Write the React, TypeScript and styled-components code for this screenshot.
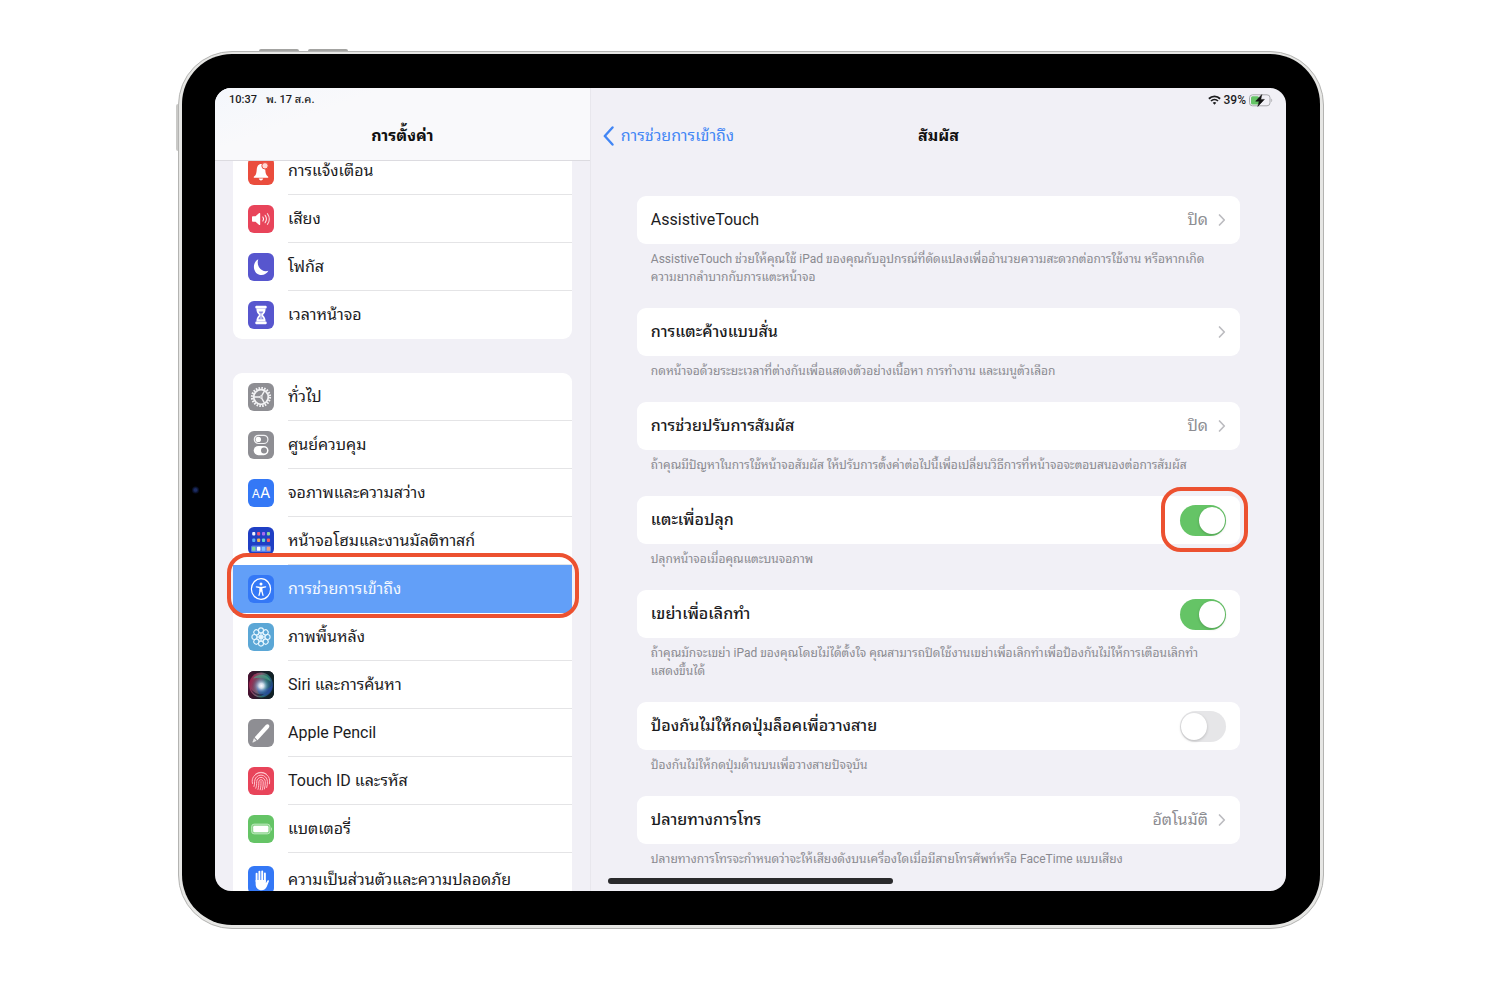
import React, { useState } from "react";
import styled, { createGlobalStyle, css } from "styled-components";

const RING = "#ec5130";

const GlobalStyle = createGlobalStyle`
  *, *::before, *::after { box-sizing: border-box; }
  body {
    margin: 0;
    background: #fff;
    color: #1c1c1e;
    font-family: Roboto, "Noto Sans Thai Looped", Loma, Waree, "Noto Sans", "Liberation Sans", sans-serif;
    -webkit-font-smoothing: antialiased;
  }
  button { font: inherit; color: inherit; background: none; border: 0; padding: 0; cursor: pointer; }
  h1, h2, p { margin: 0; }
`;

const ring = css`
  content: "";
  position: absolute;
  border: 4px solid ${RING};
  border-radius: 20px;
  pointer-events: none;
`;

const Stage = styled.div`
  height: 100vh;
  min-height: 640px;
  display: flex;
  padding: 51px 176px 71px 178px;
`;

const Device = styled.div`
  position: relative;
  flex: 1;
  min-width: 0;
  display: flex;
  padding: 2px 3px 3px;
  border: 1px solid #b4b4b2;
  border-radius: 54px;
  background: #e6e6e4;
`;

const SideKey = styled.span<{ $edge: "top" | "left"; $at: number; $length: number }>`
  position: absolute;
  background: #a3a3a1;
  ${(p) =>
    p.$edge === "top"
      ? css`top: -3px; left: ${p.$at}px; width: ${p.$length}px; height: 2px; border-radius: 2px 2px 0 0;`
      : css`left: -3px; top: ${p.$at}px; height: ${p.$length}px; width: 2px; border-radius: 2px 0 0 2px; background: #c9c9c7;`}
`;

const Camera = styled.span`
  position: absolute;
  left: 13px;
  top: 50%;
  transform: translateY(-50%);
  width: 7px;
  height: 7px;
  border-radius: 50%;
  background: radial-gradient(#1c2c63 0 25%, #080e24 60%);
`;

const Bezel = styled.div`
  flex: 1;
  min-width: 0;
  display: flex;
  padding: 34px 34px 34px 33px;
  border-radius: 50px;
  background: #000;
`;

const Screen = styled.div`
  flex: 1;
  min-width: 0;
  display: grid;
  grid-template-columns: 35% minmax(0, 1fr);
  border-radius: 16px;
  overflow: hidden;
  background: #f1f0f6;
`;

const Sidebar = styled.aside`
  min-width: 0;
  min-height: 0;
  display: flex;
  flex-direction: column;
  overflow: hidden;
`;

const SidebarHeader = styled.header`
  position: relative;
  z-index: 2;
  flex: none;
  height: 73px;
  display: flex;
  flex-direction: column;
  border-bottom: 1px solid #dcdbe0;
  background: linear-gradient(160deg, #f4f7fc, #f9f9fb 30%, #f9f9fb);
`;

const StatusLine = styled.div<{ $end?: boolean }>`
  height: 24px;
  display: flex;
  align-items: center;
  justify-content: ${(p) => (p.$end ? "flex-end" : "flex-start")};
  gap: ${(p) => (p.$end ? 3 : 9)}px;
  padding: 0 ${(p) => (p.$end ? 13 : 14)}px;
  font-size: ${(p) => (p.$end ? 12 : 11)}px;
  line-height: 16px;
  font-weight: 500;
`;

const BarTitle = styled.h1`
  font-size: 16px;
  line-height: 24px;
  font-weight: 700;
  text-align: center;
  color: #111;
`;

const SidebarTitleRow = styled.div`
  height: 48px;
  display: grid;
  place-items: center;
`;

const MenuList = styled.nav`
  flex: 1;
  min-height: 0;
  display: flex;
  flex-direction: column;
  gap: 34px;
  margin-top: -14px;
  padding: 0 18px;
`;

const MenuGroup = styled.div`
  flex: none;
  border-radius: 9px;
  background: #fff;
`;

const MenuText = styled.span`
  flex: 1;
  align-self: stretch;
  display: flex;
  align-items: center;
  border-bottom: 1px solid #e4e4e6;
  white-space: nowrap;
`;

const MenuLink = styled.a<{ $selected?: boolean; $tall?: boolean }>`
  position: relative;
  display: flex;
  align-items: center;
  gap: 14px;
  height: ${(p) => (p.$tall ? 54 : 48)}px;
  padding-left: 15px;
  font-size: 16px;
  line-height: 24px;
  text-decoration: none;
  color: #1c1c1e;

  &:last-child ${MenuText} { border-bottom-color: transparent; }

  ${(p) =>
    p.$selected &&
    css`
      z-index: 1;
      background: #629ff8;
      color: #f3f8ff;
      ${MenuText} { border-bottom-color: transparent; }
      &::after { ${ring} inset: -12px -7px -5px -6px; }
    `}
`;

const Tile = styled.span<{ $bg: string }>`
  flex: none;
  width: 26px;
  height: 28px;
  display: flex;
  align-items: center;
  justify-content: center;
  border-radius: 6px;
  overflow: hidden;
  background: ${(p) => p.$bg};
  color: #fff;
  svg { display: block; width: 26px; height: 28px; }
`;

const LetterPair = styled.span`
  display: flex;
  align-items: baseline;
  font-family: Inter, sans-serif;
  font-size: 15px;
  line-height: 18px;
  small { font-size: 12px; }
`;

const Detail = styled.main`
  position: relative;
  min-width: 0;
  min-height: 0;
  display: flex;
  flex-direction: column;
  overflow: hidden;
  border-left: 1px solid #e8e7ed;
`;

const DetailBar = styled.header`
  height: 48px;
  flex: none;
  display: grid;
  grid-template-columns: 1fr auto 1fr;
  align-items: center;
  padding: 0 12px;
`;

const BackButton = styled.button`
  && { color: #4286f5; }
  display: flex;
  align-items: center;
  gap: 7px;
  font-size: 16px;
  line-height: 24px;
  justify-self: start;
  svg { display: block; }
`;

const Groups = styled.div`
  display: flex;
  flex-direction: column;
  gap: 22px;
  padding: 36px 46px 0;
`;

const Card = styled.div`
  height: 48px;
  display: flex;
  align-items: center;
  justify-content: space-between;
  padding: 0 14px;
  border-radius: 9px;
  background: #fff;
  font-size: 16px;
  line-height: 24px;
`;

const CardButton = styled(Card).attrs({ as: "button", type: "button" })`
  && { width: 100%; padding: 0 14px; background: #fff; font-size: 16px; line-height: 24px; }
`;

const CardLabel = styled.label`
  font-weight: 500;
`;

const CardName = styled.span<{ $regular?: boolean }>`
  font-weight: ${(p) => (p.$regular ? 400 : 500)};
`;

const Value = styled.span`
  display: flex;
  align-items: center;
  gap: 10px;
  color: #8d8d92;
`;

const Note = styled.p`
  padding: 6px 14px 0;
  font-size: 12px;
  line-height: 18px;
  color: #8a8a90;
  span { display: block; white-space: nowrap; }
`;

const SwitchSlot = styled.span<{ $ringed?: boolean }>`
  position: relative;
  display: flex;
  ${(p) => p.$ringed && css`&::after { ${ring} inset: -18px -22px -16px -19px; }`}
`;

const Switch = styled.input.attrs({ type: "checkbox", role: "switch" })`
  appearance: none;
  width: 46px;
  height: 31px;
  margin: 0;
  padding: 2px 1px;
  display: flex;
  justify-content: flex-start;
  border-radius: 16px;
  background: #e6e6e8;
  cursor: pointer;
  &::before {
    content: "";
    width: 26px;
    height: 27px;
    border-radius: 50%;
    background: #fff;
    box-shadow: 0 1px 3px rgba(0, 0, 0, 0.2);
  }
  &:checked { background: #65c466; justify-content: flex-end; }
`;

const HomeBar = styled.span`
  position: absolute;
  left: 17px;
  bottom: 7px;
  width: 41%;
  height: 6px;
  border-radius: 3px;
  background: #2a2a2c;
`;

/* ---------- icons ---------- */

const BellIcon = () => (
  <svg viewBox="0 0 26 28" fill="#fff">
    <path d="M5.800 19.800c2.200-1.600 2.700-3.600 2.900-6.800C8.900 9.300 10.500 7 13 7s4.100 2.300 4.300 6c.2 3.200.7 5.200 2.900 6.800v.9H5.800zM10.800 21.500h4.400c-.2 1.100-1 1.900-2.200 1.900s-2-.8-2.200-1.900z" />
    <circle cx="17" cy="8.800" r="3.200" fill="#ffd9d3" stroke="#ea4d3d" strokeWidth="1" />
  </svg>
);

const SpeakerIcon = () => (
  <svg viewBox="0 0 26 28" fill="none" stroke="#fff" strokeLinecap="round">
    <path d="M4.800 11.300h2.700l3.700-3.200c.4-.4 1-.1 1 .5v10.800c0 .6-.6.900-1 .5l-3.700-3.200H4.800c-.5 0-.8-.3-.8-.8v-3.800c0-.5.3-.8.8-.8z" fill="#fff" stroke="none" />
    <path d="M14.900 12c.8 1.200.8 2.800 0 4" strokeWidth="1.100" />
    <path d="M17.100 10.300c1.600 2.200 1.600 5.200 0 7.400" strokeWidth="1.100" opacity=".85" />
    <path d="M19.400 8.600c2.300 3.200 2.300 7.600 0 10.800" strokeWidth="1.100" opacity=".75" />
  </svg>
);

const MoonIcon = () => (
  <svg viewBox="0 0 26 28" fill="#fff">
    <path d="M10.300 6.300c-.9 2.300-.8 5.300.6 7.700 1.900 3.400 5.800 4.900 9.500 3.800-1.300 2.700-4 4.200-6.900 4.200-4.300 0-7.600-3.500-7.600-7.900 0-3.400 1.700-6.500 4.400-7.800z" />
  </svg>
);

const HourglassIcon = () => (
  <svg viewBox="0 0 26 28" fill="#fff">
    <rect x="7.300" y="4.800" width="11.400" height="2.800" rx="1" />
    <rect x="7.300" y="20.500" width="11.400" height="2.800" rx="1" />
    <path d="M8.400 7.500h9.200c0 3.400-1 4.800-2.700 6.500 1.700 1.700 2.700 3.200 2.700 6.600H8.400c0-3.400 1-4.900 2.700-6.600-1.700-1.700-2.700-3.100-2.700-6.500z" />
    <path d="M10.700 10.500h4.600c-.4 1.200-1.800 2.300-1.900 3.500 0 1.700 1.800 2.200 2.300 4.200h-5.400c.5-2 2.300-2.500 2.300-4.200-.1-1.200-1.500-2.300-1.900-3.500z" fill="#8c8be0" />
    <path d="M12.600 12h.8v6h-.8z" />
  </svg>
);

const GearIcon = () => {
  const spokes = [60, 180, 300];
  return (
    <svg viewBox="0 0 26 28" fill="none" stroke="#f2f2f4">
      <circle cx="13" cy="14" r="9" strokeWidth="2.200" strokeDasharray="1.600 1.230" />
      <circle cx="13" cy="14" r="7.300" strokeWidth="1.800" />
      {spokes.map((a) => (
        <path key={a} d="M14 14H20" strokeWidth="1.300" transform={`rotate(${a} 13 14)`} />
      ))}
      <circle cx="13" cy="14" r="1.200" strokeWidth="1" />
    </svg>
  );
};

const TogglesIcon = () => (
  <svg viewBox="0 0 26 28" fill="none">
    <rect x="6.300" y="4.300" width="13.600" height="8.200" rx="4.100" stroke="#f2f2f4" strokeWidth="1.200" />
    <circle cx="10.300" cy="8.400" r="2.700" fill="#fff" />
    <rect x="5.700" y="15" width="14.800" height="9.200" rx="4.600" fill="#fff" />
    <circle cx="16" cy="19.600" r="3" fill="#8e8e93" />
  </svg>
);

const HomeGridIcon = () => {
  const rows = [
    ["#f0f3ff", "#e8557e", "#a66af0", "#8fd49a"],
    ["#5ab0f5", "#f0b35a", "#6ad6d0", "#ee5a64"],
  ];
  const dock = ["#7fd6a0", "#ffffff", "#7fc4ff", "#f2a07a"];
  return (
    <svg viewBox="0 0 26 28">
      <rect x="3" y="18.500" width="20" height="6.500" rx="1.500" fill="#5a7fe8" />
      {rows.map((row, r) =>
        row.map((c, i) => <rect key={`${r}${i}`} x={4.200 + i * 4.900} y={5 + r * 6.600} width="3.100" height="3.400" rx=".9" fill={c} />)
      )}
      {dock.map((c, i) => (
        <rect key={c} x={4 + i * 4.900} y="19.800" width="3.500" height="4" rx=".9" fill={c} />
      ))}
    </svg>
  );
};

const AccessIcon = () => (
  <svg viewBox="0 0 26 28" fill="none" stroke="#fff" strokeLinecap="round" strokeLinejoin="round">
    <ellipse cx="13" cy="14" rx="9.600" ry="10.300" strokeWidth="1.200" />
    <circle cx="13" cy="8.900" r="1.500" fill="#fff" stroke="none" />
    <path d="M8.400 11.800l3.300.7h2.600l3.300-.7" strokeWidth="1.300" />
    <path d="M11.900 12.500h2.200v3.800h-2.200z" fill="#fff" strokeWidth=".6" />
    <path d="M12.300 15.500l-1.300 4.900M13.700 15.500l1.300 4.900" strokeWidth="1.300" />
  </svg>
);

const FlowerIcon = () => (
  <svg viewBox="0 0 26 28" fill="none" stroke="#e6f6ff" strokeWidth="1.100">
    {[0, 45, 90, 135, 180, 225, 270, 315].map((a) => (
      <circle key={a} cx="13" cy="7.400" r="2.500" transform={`rotate(${a} 13 14)`} />
    ))}
    {[0, 45, 90, 135, 180, 225, 270, 315].map((a) => (
      <circle key={a} cx="13" cy="11" r="1.200" strokeWidth=".8" transform={`rotate(${a + 22} 13 14)`} />
    ))}
    <circle cx="13" cy="14" r="1.500" fill="#e6f6ff" />
  </svg>
);

const SiriIcon = () => (
  <svg viewBox="0 0 26 28">
    <defs>
      <radialGradient id="siriCore" cx="52%" cy="54%" r="50%">
        <stop offset="0" stopColor="#fff" />
        <stop offset=".25" stopColor="#dbe6f6" stopOpacity=".9" />
        <stop offset=".6" stopColor="#6fa3cf" stopOpacity=".35" />
        <stop offset="1" stopColor="#123" stopOpacity="0" />
      </radialGradient>
      <linearGradient id="siriHue" x1="0" y1=".35" x2="1" y2=".65">
        <stop offset="0" stopColor="#a81f4d" />
        <stop offset=".4" stopColor="#8f6a80" />
        <stop offset=".65" stopColor="#2f8276" />
        <stop offset="1" stopColor="#1e3f8f" />
      </linearGradient>
      <linearGradient id="siriBack" x1="0" y1="0" x2="1" y2="0">
        <stop offset="0" stopColor="#4a1030" />
        <stop offset=".5" stopColor="#1d2029" />
        <stop offset="1" stopColor="#0e2226" />
      </linearGradient>
    </defs>
    <rect width="26" height="28" fill="url(#siriBack)" />
    <ellipse cx="13" cy="14" rx="12" ry="12.500" fill="url(#siriHue)" opacity=".85" />
    <path d="M5 7.500c5-6 15-5 18 3-5-4-12-4-18-3z" fill="#4fae8c" opacity=".6" />
    <path d="M9 15c4 5 10 4 15.500-.5C24 20 20 24.500 14 25c-3-1-5-5-5-10z" fill="#2a48b5" opacity=".55" />
    <path d="M3 18c3 4 8 6 13 5-4 4-11 1-13-5z" fill="#170f2a" opacity=".6" />
    <circle cx="13" cy="14" r="10" fill="url(#siriCore)" />
  </svg>
);

const PencilIcon = () => (
  <svg viewBox="0 0 26 28" fill="#fff">
    <path d="M17.800 6c1-1 2.200-1 3-.2.800.8.800 2.100-.1 3.100L9.500 21.200l-2.800-2.900z" />
    <path d="M6 19.100l2.600 2.700-3.500 1.700c-.4.200-.8-.1-.6-.6z" opacity=".8" />
  </svg>
);

const TouchIcon = () => (
  <svg viewBox="0 0 26 28" fill="none" stroke="#ffc2cb" strokeWidth="1" strokeLinecap="round">
    <path d="M7.500 7.200a9.300 9.300 0 0 1 11 0" />
    <path d="M4.500 16.500c-.7-2.700-.2-5 1-6.700a8.900 8.900 0 0 1 15 0c1.200 1.900 1.400 4.300.9 7" />
    <path d="M6 19.500c.6-1.500.6-3 .6-5a6.400 6.400 0 0 1 12.800 0c0 2.300-.1 4-.7 6" />
    <path d="M7.800 21.200c.8-2 .9-4 .9-6.500a4.300 4.300 0 0 1 8.600 0c0 2.800-.2 5-.9 7.300" />
    <path d="M10 22.400c.8-2.500.8-4.900.8-7.500a2.200 2.200 0 0 1 4.400 0c0 3-.2 5.500-1 8" />
    <path d="M13 14.500c0 3 0 5.500-.8 8.300" />
  </svg>
);

const BatteryIcon = () => (
  <svg viewBox="0 0 26 28">
    <rect x="3.600" y="9.100" width="18.400" height="9.800" rx="2.600" fill="#8ad48b" stroke="#c9edc9" strokeWidth=".8" />
    <rect x="5.200" y="10.800" width="15.200" height="6.500" rx="1.400" fill="#fff" />
    <path d="M23 12.300c1.200.5 1.200 3.100 0 3.600z" fill="#c9edc9" />
  </svg>
);

const HandIcon = () => (
  <svg viewBox="0 0 26 28" fill="none" stroke="#fff" strokeLinecap="round">
    <path d="M8.600 7.600v8M11.400 5.600v9M14.200 5.400v9M16.900 7.400v8" strokeWidth="1.900" />
    <path d="M7.650 14h10.200v3.300l1.600-2.700c.5-.8 1.900-.4 1.500.7l-2.100 5.200c-1 2.400-2.700 3.700-5.300 3.700-3.500 0-5.900-2.400-5.900-6z" fill="#fff" stroke="none" />
  </svg>
);

const Chevron = () => (
  <svg width="8" height="14" viewBox="0 0 8 14" fill="none" stroke="#bcbcc0" strokeWidth="1.700" strokeLinecap="round" strokeLinejoin="round" aria-hidden="true">
    <path d="M1.500 2L6.300 7l-4.800 5" />
  </svg>
);

const BackChevron = () => (
  <svg width="11" height="20" viewBox="0 0 11 20" fill="none" stroke="currentColor" strokeWidth="2.400" strokeLinecap="round" strokeLinejoin="round" aria-hidden="true">
    <path d="M9.500 1.500L1.800 10l7.700 8.500" />
  </svg>
);

const WifiIcon = () => (
  <svg width="13" height="10" viewBox="0 0 13 10" fill="none" stroke="#1c1c1e" aria-hidden="true">
    <path d="M.9 3.700a8 8 0 0 1 11.200 0" strokeWidth="1.900" />
    <path d="M3 6a5 5 0 0 1 7 0" strokeWidth="1.700" />
    <path d="M6.500 9.800L4.700 7.800a2.600 2.600 0 0 1 3.600 0z" fill="#1c1c1e" stroke="none" />
  </svg>
);

const ChargeIcon = () => (
  <svg width="24" height="13" viewBox="0 0 24 13" aria-hidden="true">
    <rect x=".5" y=".8" width="20.500" height="11" rx="3" fill="none" stroke="#a9a9ad" />
    <path d="M22.300 4.500c1.200.5 1.200 3.200 0 3.700z" fill="#a9a9ad" />
    <rect x="2" y="2.200" width="8" height="8.200" rx="1.500" fill="#65c466" />
    <path d="M12.800.6L6.700 7.200h3.500L8.800 12.400l6.600-7H11.800z" fill="#111" stroke="#111" strokeWidth=".5" />
  </svg>
);

/* ---------- data ---------- */

type MenuItem = { id: string; text: string; bg: string; icon: React.ReactNode; selected?: boolean; tall?: boolean };

const menu: MenuItem[][] = [
  [
    { id: "notifications", text: "การแจ้งเตือน", bg: "#ea4d3d", icon: <BellIcon /> },
    { id: "sounds", text: "เสียง", bg: "#e8445a", icon: <SpeakerIcon /> },
    { id: "focus", text: "โฟกัส", bg: "#5756ce", icon: <MoonIcon /> },
    { id: "screen-time", text: "เวลาหน้าจอ", bg: "#5756ce", icon: <HourglassIcon /> },
  ],
  [
    { id: "general", text: "ทั่วไป", bg: "#8e8e93", icon: <GearIcon /> },
    { id: "control-center", text: "ศูนย์ควบคุม", bg: "#8e8e93", icon: <TogglesIcon /> },
    {
      id: "display",
      text: "จอภาพและความสว่าง",
      bg: "#3478f6",
      icon: (
        <LetterPair aria-hidden="true">
          <small>A</small>A
        </LetterPair>
      ),
    },
    { id: "home-screen", text: "หน้าจอโฮมและงานมัลติทาสก์", bg: "#1f3fc4", icon: <HomeGridIcon /> },
    { id: "accessibility", text: "การช่วยการเข้าถึง", bg: "#3478f6", icon: <AccessIcon />, selected: true },
    { id: "wallpaper", text: "ภาพพื้นหลัง", bg: "#5ba7d6", icon: <FlowerIcon /> },
    { id: "siri", text: "Siri และการค้นหา", bg: "#17101f", icon: <SiriIcon /> },
    { id: "pencil", text: "Apple Pencil", bg: "#8e8e93", icon: <PencilIcon /> },
    { id: "touch-id", text: "Touch ID และรหัส", bg: "#e8445a", icon: <TouchIcon /> },
    { id: "battery", text: "แบตเตอรี่", bg: "#65c466", icon: <BatteryIcon /> },
    { id: "privacy", text: "ความเป็นส่วนตัวและความปลอดภัย", bg: "#3478f6", icon: <HandIcon />, tall: true },
  ],
];

type Setting = { id: string; name: string; note: string[]; value?: string; on?: boolean; ringed?: boolean; regular?: boolean };

const settings: Setting[] = [
  {
    id: "assistive-touch",
    name: "AssistiveTouch",
    value: "ปิด",
    regular: true,
    note: [
      "AssistiveTouch ช่วยให้คุณใช้ iPad ของคุณกับอุปกรณ์ที่ดัดแปลงเพื่ออำนวยความสะดวกต่อการใช้งาน หรือหากเกิด",
      "ความยากลำบากกับการแตะหน้าจอ",
    ],
  },
  { id: "haptic", name: "การแตะค้างแบบสั่น", value: "", note: ["กดหน้าจอด้วยระยะเวลาที่ต่างกันเพื่อแสดงตัวอย่างเนื้อหา การทำงาน และเมนูตัวเลือก"] },
  {
    id: "accommodations",
    name: "การช่วยปรับการสัมผัส",
    value: "ปิด",
    note: ["ถ้าคุณมีปัญหาในการใช้หน้าจอสัมผัส ให้ปรับการตั้งค่าต่อไปนี้เพื่อเปลี่ยนวิธีการที่หน้าจอจะตอบสนองต่อการสัมผัส"],
  },
  { id: "tap-to-wake", name: "แตะเพื่อปลุก", on: true, ringed: true, note: ["ปลุกหน้าจอเมื่อคุณแตะบนจอภาพ"] },
  {
    id: "shake-to-undo",
    name: "เขย่าเพื่อเลิกทำ",
    on: true,
    note: ["ถ้าคุณมักจะเขย่า iPad ของคุณโดยไม่ได้ตั้งใจ คุณสามารถปิดใช้งานเขย่าเพื่อเลิกทำเพื่อป้องกันไม่ให้การเตือนเลิกทำ", "แสดงขึ้นได้"],
  },
  { id: "lock-end-call", name: "ป้องกันไม่ให้กดปุ่มล็อคเพื่อวางสาย", on: false, note: ["ป้องกันไม่ให้กดปุ่มด้านบนเพื่อวางสายปัจจุบัน"] },
  {
    id: "call-routing",
    name: "ปลายทางการโทร",
    value: "อัตโนมัติ",
    note: ["ปลายทางการโทรจะกำหนดว่าจะให้เสียงดังบนเครื่องใดเมื่อมีสายโทรศัพท์หรือ FaceTime แบบเสียง"],
  },
];

const SettingBlock = ({ item }: { item: Setting }) => {
  const [on, setOn] = useState(Boolean(item.on));
  return (
    <section>
      {item.on === undefined ? (
        <CardButton>
          <CardName $regular={item.regular}>{item.name}</CardName>
          <Value>
            {item.value}
            <Chevron />
          </Value>
        </CardButton>
      ) : (
        <Card>
          <CardLabel htmlFor={item.id}>{item.name}</CardLabel>
          <SwitchSlot $ringed={item.ringed}>
            <Switch id={item.id} checked={on} onChange={() => setOn(!on)} />
          </SwitchSlot>
        </Card>
      )}
      <Note>
        {item.note.map((line) => (
          <span key={line}>{line}</span>
        ))}
      </Note>
    </section>
  );
};

export default function App() {
  return (
    <>
      <GlobalStyle />
      <Stage>
        <Device>
          <SideKey $edge="top" $at={80} $length={40} />
          <SideKey $edge="top" $at={129} $length={40} />
          <SideKey $edge="left" $at={52} $length={47} />
          <Camera />
          <Bezel>
            <Screen>
              <Sidebar>
                <SidebarHeader>
                  <StatusLine>
                    <span>10:37</span>
                    <span>พ. 17 ส.ค.</span>
                  </StatusLine>
                  <SidebarTitleRow>
                    <BarTitle>การตั้งค่า</BarTitle>
                  </SidebarTitleRow>
                </SidebarHeader>
                <MenuList>
                  {menu.map((group) => (
                    <MenuGroup key={group[0].id}>
                      {group.map((m) => (
                        <MenuLink key={m.id} href={`#${m.id}`} $selected={m.selected} $tall={m.tall}>
                          <Tile $bg={m.bg}>{m.icon}</Tile>
                          <MenuText>{m.text}</MenuText>
                        </MenuLink>
                      ))}
                    </MenuGroup>
                  ))}
                </MenuList>
              </Sidebar>
              <Detail>
                <StatusLine $end>
                  <WifiIcon />
                  <span>39%</span>
                  <ChargeIcon />
                </StatusLine>
                <DetailBar>
                  <BackButton type="button">
                    <BackChevron />
                    การช่วยการเข้าถึง
                  </BackButton>
                  <BarTitle as="h2">สัมผัส</BarTitle>
                </DetailBar>
                <Groups>
                  {settings.map((s) => (
                    <SettingBlock key={s.id} item={s} />
                  ))}
                </Groups>
                <HomeBar />
              </Detail>
            </Screen>
          </Bezel>
        </Device>
      </Stage>
    </>
  );
}
